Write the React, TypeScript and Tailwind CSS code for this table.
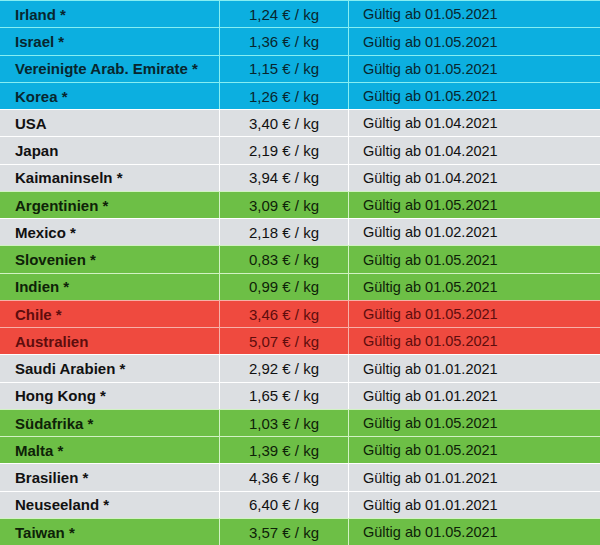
import React from "react";

type Kind = "blue" | "gray" | "green" | "red";

const rows: [string, string, string, Kind][] = [
  ["Irland *", "1,24", "01.05.2021", "blue"],
  ["Israel *", "1,36", "01.05.2021", "blue"],
  ["Vereinigte Arab. Emirate *", "1,15", "01.05.2021", "blue"],
  ["Korea *", "1,26", "01.05.2021", "blue"],
  ["USA", "3,40", "01.04.2021", "gray"],
  ["Japan", "2,19", "01.04.2021", "gray"],
  ["Kaimaninseln *", "3,94", "01.04.2021", "gray"],
  ["Argentinien *", "3,09", "01.05.2021", "green"],
  ["Mexico *", "2,18", "01.02.2021", "gray"],
  ["Slovenien *", "0,83", "01.05.2021", "green"],
  ["Indien *", "0,99", "01.05.2021", "green"],
  ["Chile *", "3,46", "01.05.2021", "red"],
  ["Australien", "5,07", "01.05.2021", "red"],
  ["Saudi Arabien *", "2,92", "01.01.2021", "gray"],
  ["Hong Kong *", "1,65", "01.01.2021", "gray"],
  ["Südafrika *", "1,03", "01.05.2021", "green"],
  ["Malta *", "1,39", "01.05.2021", "green"],
  ["Brasilien *", "4,36", "01.01.2021", "gray"],
  ["Neuseeland *", "6,40", "01.01.2021", "gray"],
  ["Taiwan *", "3,57", "01.05.2021", "green"],
];

const rowCls: Record<Kind, string> = {
  blue: "bg-[#0cafe0] border-[#86eef2] text-[#08262e]",
  gray: "bg-[#dcdfe2] border-white text-[#111111]",
  green: "bg-[#6dbf46] border-[#d2f2c4] text-[#0e2208]",
  red: "bg-[#ef4a3f] border-[#f7b0a8] text-[#5e0d0d]",
};

const cellBorder: Record<Kind, string> = {
  blue: "border-[#86eef2]",
  gray: "border-white",
  green: "border-[#d2f2c4]",
  red: "border-[#f7b0a8]",
};

export default function App() {
  return (
    <div
      className="w-[600px] h-[545px] bg-white flex flex-col overflow-hidden"
      style={{ fontFamily: '"Liberation Sans", Arial, sans-serif' }}
    >
      {rows.map(([land, price, date, kind], i) => (
        <div
          key={i}
          className={`flex h-[27.25px] shrink-0 border-t ${rowCls[kind]}`}
        >
          <div className="w-[219px] shrink-0 flex items-center pt-[2px] pl-[15px] font-bold text-[15px]">
            {land}
          </div>
          <div
            className={`w-[129px] shrink-0 flex items-center justify-center pt-[2px] border-l text-[15px] ${cellBorder[kind]}`}
          >
            {price} € / kg
          </div>
          <div
            className={`flex-1 flex items-center pl-[14px] pt-[2px] border-l text-[14.5px] ${cellBorder[kind]}`}
          >
            Gültig ab {date}
          </div>
        </div>
      ))}
    </div>
  );
}
